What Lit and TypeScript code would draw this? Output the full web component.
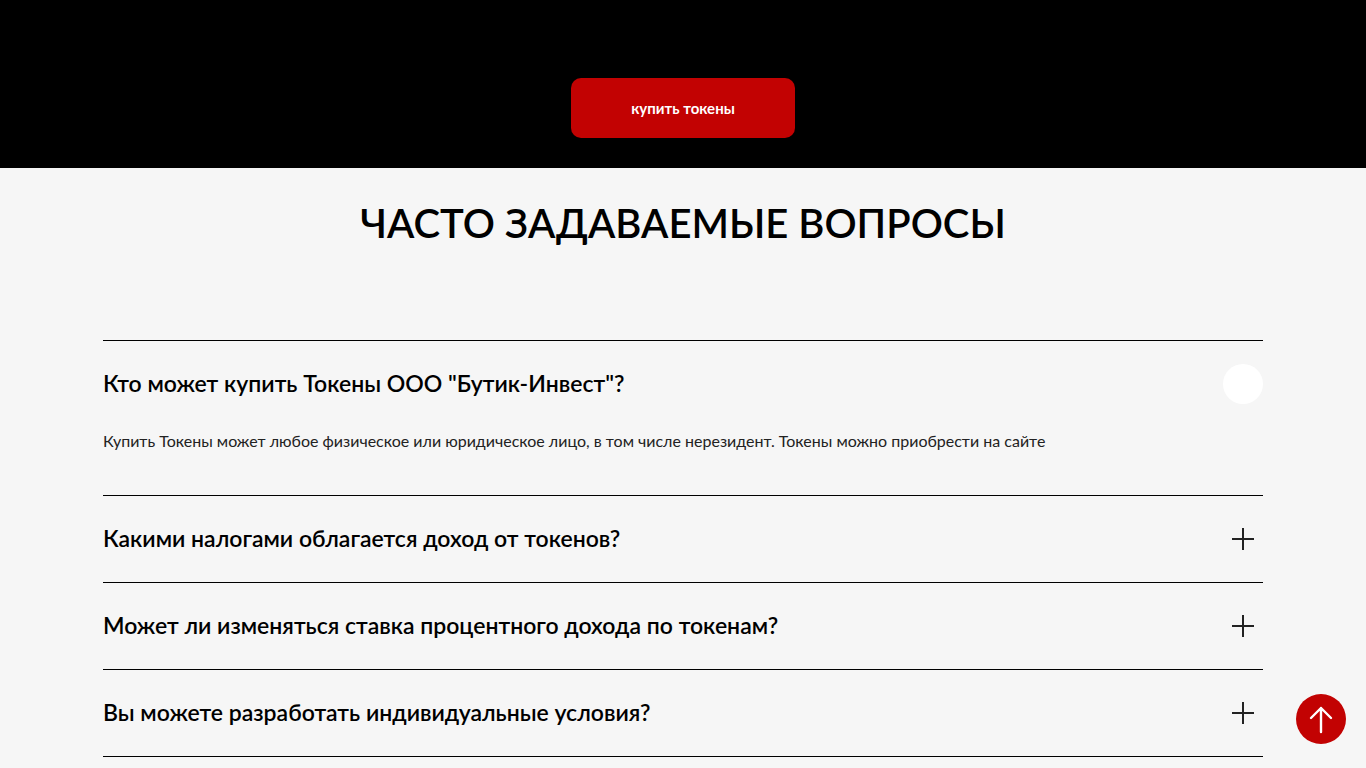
import { LitElement, html, css } from "lit";
import { customElement, state } from "lit/decorators.js";

interface Question {
  title: string;
  answer: string;
}

const QUESTIONS: Question[] = [
  {
    title: 'Кто может купить Токены ООО "Бутик-Инвест"?',
    answer:
      "Купить Токены может любое физическое или юридическое лицо, в том числе нерезидент. Токены можно приобрести на сайте",
  },
  { title: "Какими налогами облагается доход от токенов?", answer: "" },
  { title: "Может ли изменяться ставка процентного дохода по токенам?", answer: "" },
  { title: "Вы можете разработать индивидуальные условия?", answer: "" },
];

@customElement("app-root")
export class AppRoot extends LitElement {
  @state() private open = 0;

  static styles = css`
    :host {
      display: block;
      min-height: 100vh;
      background: #f6f6f6;
      color: #000;
      font-family: Lato, "Open Sans", sans-serif;
    }
    .hero {
      display: flex;
      justify-content: center;
      padding: 78px 20px 30px;
      background: #000;
    }
    .buy {
      display: flex;
      align-items: center;
      justify-content: center;
      height: 60px;
      padding: 0 60px;
      border-radius: 10px;
      background: #c20202;
      color: #fff;
      font-size: 15px;
      font-weight: 700;
      text-decoration: none;
    }
    .faq {
      max-width: 1160px;
      margin: 0 auto;
      padding-top: 30px;
    }
    .title {
      margin: 0 0 92px;
      font-size: 40px;
      line-height: 50px;
      font-weight: 600;
      text-align: center;
    }
    .item {
      border-top: 1px solid #000;
    }
    .item:last-child {
      border-bottom: 1px solid #000;
    }
    .heading {
      margin: 0;
    }
    .toggle {
      display: flex;
      align-items: center;
      justify-content: space-between;
      width: 100%;
      padding: 23px 0;
      border: 0;
      background: none;
      color: inherit;
      font: 600 23px/32px Lato, "Open Sans", sans-serif;
      text-align: left;
      cursor: pointer;
    }
    .label {
      padding-bottom: 2px;
    }
    .icon {
      display: block;
      width: 40px;
      height: 40px;
      flex: none;
      border-radius: 50%;
      stroke: #222;
      stroke-width: 2;
    }
    .icon.open {
      background: #fff;
      stroke: #fff;
    }
    .answer {
      margin: 0;
      padding: 0 0 40px;
      color: #222;
      font-size: 16px;
      line-height: 28px;
      font-weight: 400;
    }
    .up {
      position: fixed;
      right: 20px;
      bottom: 24px;
      width: 50px;
      height: 50px;
      padding: 0;
      border: 0;
      border-radius: 50%;
      background: #c20202;
      cursor: pointer;
    }
    .arrow {
      display: block;
      fill: none;
      stroke: #fff;
      stroke-width: 2.4;
      stroke-linecap: round;
      stroke-linejoin: round;
    }
  `;

  render() {
    return html`
      <section class="hero"><a class="buy" href="#buy">купить токены</a></section>
      <section class="faq">
        <h2 class="title">ЧАСТО ЗАДАВАЕМЫЕ ВОПРОСЫ</h2>
        ${QUESTIONS.map(
          (q, i) => html`<div class="item">
            <h3 class="heading">
              <button
                class="toggle"
                aria-expanded=${this.open === i ? "true" : "false"}
                @click=${() => (this.open = this.open === i ? -1 : i)}
              >
                <span class="label">${q.title}</span>
                <svg class="icon ${this.open === i ? "open" : ""}" viewBox="0 0 40 40" aria-hidden="true">
                  <path d="M9 20H31M20 9V31" />
                </svg>
              </button>
            </h3>
            ${this.open === i ? html`<p class="answer">${q.answer}</p>` : ""}
          </div>`
        )}
      </section>
      <button class="up" aria-label="Наверх">
        <svg class="arrow" width="50" height="50" viewBox="0 0 50 50" aria-hidden="true">
          <path d="M15 24L25 14L35 24M25 14V38" />
        </svg>
      </button>
    `;
  }
}
